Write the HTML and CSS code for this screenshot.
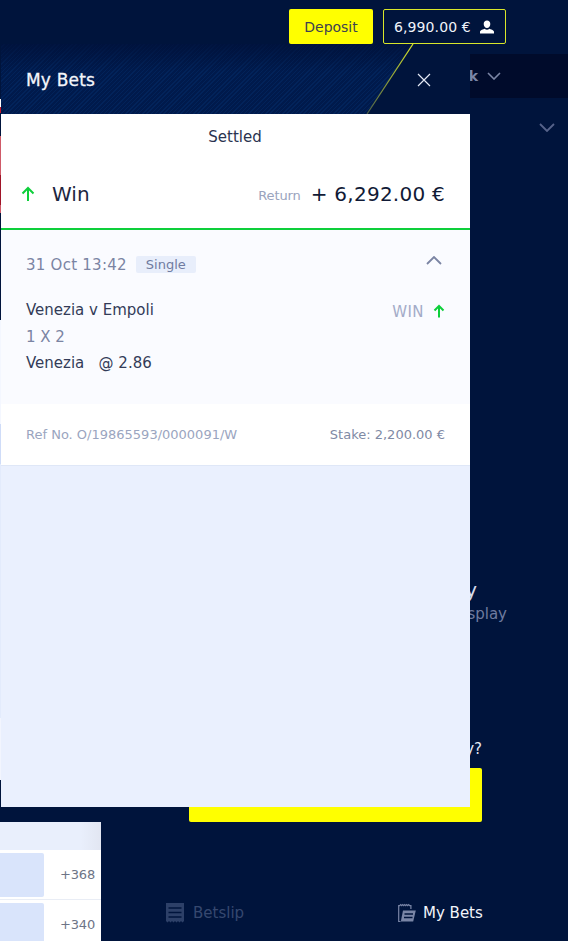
FILE: index.html
```html
<!DOCTYPE html>
<html lang="en">
<head>
<title>My Bets</title>
<meta charset="utf-8">
<meta name="viewport" content="width=device-width, initial-scale=1">
<link rel="stylesheet" href="styles.css">
</head>
<body>

<div class="page">
  <div class="top_bar">
    <button class="deposit" type="button">Deposit</button>
    <div class="balance">
      <span>6,990.00 €</span>
      <svg class="user_icon" viewBox="0 0 16 16"><path d="M8 1.500c-2 0-3.300 1.400-3.300 3.500S6 9 8 9s3.300-2 3.300-4-1.300-3.500-3.300-3.500zM1 14.500v-1.800c0-1.500 3.500-2.700 4.700-3 .6.6 1.400 1 2.300 1s1.700-.4 2.300-1c1.200.3 4.700 1.500 4.700 3v1.800z" fill="#fff"/></svg>
    </div>
  </div>

  <div class="filter_bar">
    <span>k</span>
    <svg class="chevron" viewBox="0 0 14 8"><path d="M1 1l6 6 6-6" fill="none" stroke="#7b86a6" stroke-width="1.600"/></svg>
  </div>

  <div class="second_row">
    <svg class="chevron_big" viewBox="0 0 16 9"><path d="M1 1l7 7 7-7" fill="none" stroke="#56638a" stroke-width="1.800"/></svg>
  </div>

  <div class="promo">
    <p class="promo_title">y</p>
    <p class="promo_sub">splay</p>
    <p class="promo_ask">y?</p>
    <div class="promo_button"></div>
  </div>

  <div class="bottom">
    <div class="odds_panel">
      <div class="odds_head"></div>
      <div class="odds_row">
        <div class="odds_cell"></div>
        <span>+368</span>
      </div>
      <div class="odds_row">
        <div class="odds_cell"></div>
        <span>+340</span>
      </div>
    </div>
    <div class="tab betslip">
      <svg class="tab_icon" viewBox="0 0 18 20"><path d="M0 0h18v18l-1.500 1.500L15 18l-1.500 1.500L12 18l-1.500 1.500L9 18l-1.500 1.500L6 18l-1.500 1.500L3 18l-1.500 1.500L0 18z" fill="#2d4068"/><path d="M2.500 5h13M2.500 9.500h13M2.500 14h13" stroke="#00143c" stroke-width="1.500"/></svg>
      <span>Betslip</span>
    </div>
    <div class="tab mybets">
      <svg class="tab_icon" viewBox="0 0 18 20"><path d="M2.500 18.500H.7V2.700h1l1-1 1 1 1-1 1 1 1-1 1 1 1-1 1 1 1-1 1 1h1.200V6" fill="none" stroke="#7985a6" stroke-width="1.200"/><path d="M5 7.500h12.800L15.200 18.500H2.800z" fill="#7985a6"/><path d="M6.500 11h8.500M6 14.500h8.500" stroke="#00143c" stroke-width="1.300"/></svg>
      <span>My Bets</span>
    </div>
  </div>

  <!-- bits of the page that peek out left of the drawer -->
  <div class="edge"></div>

  <div class="drawer">
    <div class="drawer_head">
      <div class="hatch"></div>
      <svg class="slash" viewBox="0 0 48 70"><defs><linearGradient id="fade" x1="0" y1="0" x2="0" y2="1"><stop offset="0" stop-color="#d8e62a"/><stop offset="1" stop-color="#4d5f48"/></linearGradient></defs><path d="M47 0L1 70" stroke="url(#fade)" stroke-width="1.200" fill="none"/></svg>
      <h2>My Bets</h2>
      <svg class="close" viewBox="0 0 14 14"><path d="M1 1l12 12M13 1L1 13" stroke="#e4e9f5" stroke-width="1.200"/></svg>
    </div>

    <div class="summary">
      <p class="status">Settled</p>
      <div class="result">
        <svg class="arrow" viewBox="0 0 14 16"><path d="M7 15V2M1.500 7.500L7 2l5.500 5.500" fill="none" stroke="#0ecf3b" stroke-width="2"/></svg>
        <span class="result_name">Win</span>
        <span class="return_label">Return</span>
        <span class="return_value">+ 6,292.00 €</span>
      </div>
    </div>

    <div class="bet">
      <div class="bet_head">
        <span class="bet_date">31 Oct 13:42</span>
        <span class="bet_type">Single</span>
        <svg class="chevron_up" viewBox="0 0 16 9"><path d="M1 8l7-7 7 7" fill="none" stroke="#7b84a3" stroke-width="1.800"/></svg>
      </div>
      <div class="bet_body">
        <div class="bet_lines">
          <p>Venezia v Empoli</p>
          <p class="market">1 X 2</p>
          <p>Venezia &nbsp;&nbsp;@ 2.86</p>
        </div>
        <div class="bet_result">
          <span>WIN</span>
          <svg class="arrow_small" viewBox="0 0 12 14"><path d="M6 13.500V2M1.500 6.500L6 2l4.500 4.500" fill="none" stroke="#0ecf3b" stroke-width="2"/></svg>
        </div>
      </div>
    </div>

    <div class="bet_foot">
      <span class="ref">Ref No. O/19865593/0000091/W</span>
      <span class="stake">Stake: 2,200.00 €</span>
    </div>
  </div>
</div>

</body>
</html>
```

FILE: styles.css
```css
* {
  box-sizing: border-box;
}

html, body {
  margin: 0;
  padding: 0;
}

body {
  font-family: "DejaVu Sans", Verdana, sans-serif;
  background-color: #00143c;
}

p, h2 {
  margin: 0;
}

svg {
  display: block;
}

.page {
  position: relative;
  display: flex;
  flex-direction: column;
  width: 568px;
  height: 941px;
  overflow: hidden;
}

/* Top bar */
.top_bar {
  display: flex;
  flex: none;
  justify-content: flex-end;
  gap: 10px;
  height: 54px;
  padding: 9px 62px 0 0;
}

.deposit {
  width: 84px;
  height: 35px;
  border: 0;
  border-radius: 2px;
  background-color: #ffff00;
  color: #3d4150;
  font-family: inherit;
  font-size: 14px;
}

.balance {
  display: flex;
  align-items: center;
  justify-content: space-between;
  width: 123px;
  height: 35px;
  padding: 0 10px;
  border: 1px solid #d8e62a;
  border-radius: 2px;
  color: #f0f3fa;
  font-size: 14px;
  letter-spacing: 0.1px;
}

.user_icon {
  width: 16px;
  height: 16px;
}

/* Under the drawer */
.filter_bar {
  display: flex;
  flex: none;
  align-items: center;
  justify-content: flex-end;
  gap: 9px;
  height: 44px;
  padding-right: 67px;
  background-color: #000b2b;
  color: #7b86a6;
  font-size: 14px;
  font-weight: bold;
}

.chevron {
  width: 14px;
  height: 8px;
}

.second_row {
  display: flex;
  flex: none;
  justify-content: flex-end;
  height: 34px;
  padding: 25px 13px 0 0;
}

.chevron_big {
  width: 16px;
  height: 9px;
}

.promo {
  display: flex;
  flex-direction: column;
  align-items: flex-end;
  flex: 1;
  min-height: 0;
  padding: 446px 61px 0 0;
}

.promo_title {
  padding-right: 30px;
  color: #d5dbea;
  font-size: 20px;
  line-height: 24px;
}

.promo_sub {
  margin-top: 2px;
  color: #6f7b9f;
  font-size: 15px;
  line-height: 20px;
}

.promo_ask {
  margin-top: 115px;
  padding-right: 25px;
  color: #e4e9f5;
  font-size: 15px;
  line-height: 20px;
}

.promo_button {
  flex: none;
  width: 293px;
  height: 54px;
  margin: 9px 25px 0 0;
  border-radius: 2px;
  background-color: #ffff00;
}

/* Bottom strip */
.bottom {
  display: flex;
  flex: none;
  height: 119px;
}

.odds_panel {
  width: 101px;
  background-color: #fff;
}

.odds_head {
  height: 28px;
  background: linear-gradient(to right, #e9effc 80%, #e2e6f2);
}

.odds_row {
  display: flex;
  align-items: center;
  justify-content: space-between;
  height: 50px;
  padding: 3px 6px 3px 0;
  border-bottom: 1px solid #e9edf5;
  color: #6d7486;
  font-size: 13px;
  letter-spacing: -0.2px;
}

.odds_cell {
  flex: none;
  width: 44px;
  height: 44px;
  border-radius: 0 2px 2px 0;
  background-color: #d9e4fb;
}

.tab {
  display: flex;
  align-items: center;
  gap: 9px;
  height: 22px;
  margin-top: 80px;
  font-size: 15px;
}

.betslip {
  width: 232px;
  margin-left: 65px;
  color: #36486f;
}

.mybets {
  gap: 7px;
  color: #f2f5fb;
}

.tab_icon {
  width: 18px;
  height: 20px;
}

/* Left edge, one pixel of the page behind */
.edge {
  position: absolute;
  top: 44px;
  left: 0;
  width: 1px;
  height: 763px;
  background: linear-gradient(to bottom,
    #00143c 0 55px, #fff 55px 63px, #c4182c 63px 69px, #00143c 69px 92px,
    #cf5a68 92px 131px, #a01428 131px 161px, #cf5a68 161px 169px, #00143c 169px 276px,
    #f4f7ff 276px 380px, #cfdcf8 380px 420px, #e3ebfc 420px 674px, #f2f5fe 674px 736px, #00143c 736px);
}

/* Drawer */
.drawer {
  position: absolute;
  top: 44px;
  left: 1px;
  display: flex;
  flex-direction: column;
  width: 469px;
  height: 763px;
  background-color: #eaf0fe;
  color: #1d2640;
}

.drawer_head {
  position: relative;
  display: flex;
  align-items: center;
  justify-content: space-between;
  flex: none;
  height: 70px;
  padding: 2px 39px 0 25px;
  background-color: #00143c;
  color: #f4f6fb;
}

.hatch {
  position: absolute;
  top: 0;
  left: 0;
  width: 412px;
  height: 70px;
  background:
    linear-gradient(to bottom, rgba(0, 16, 56, 0.75), rgba(0, 16, 56, 0) 40%),
    repeating-linear-gradient(135deg, #001a4c 0 2px, #02235a 2px 3px);
  clip-path: polygon(0 0, 100% 0, 366px 100%, 0 100%);
}

.slash {
  position: absolute;
  top: 0;
  left: 365px;
  width: 48px;
  height: 70px;
}

.drawer_head h2 {
  position: relative;
  font-size: 17px;
  font-weight: normal;
  letter-spacing: 0.2px;
  -webkit-text-stroke: 0.3px #f4f6fb;
}

.close {
  position: relative;
  width: 14px;
  height: 14px;
}

.summary {
  flex: none;
  height: 116px;
  border-bottom: 2px solid #0ecf3b;
  background-color: #fff;
}

.status {
  padding: 13px 1px 0 0;
  font-size: 15px;
  line-height: 20px;
  text-align: center;
  color: #2a3350;
}

.result {
  display: flex;
  align-items: center;
  height: 34px;
  margin-top: 30px;
  padding: 0 25px 0 20px;
}

.arrow {
  width: 14px;
  height: 16px;
  margin-right: 17px;
}

.result_name {
  flex: 1;
  font-size: 20px;
}

.return_label {
  margin: 3px 10px 0 0;
  color: #9aa3bd;
  font-size: 13px;
  letter-spacing: -0.1px;
}

.return_value {
  color: #111a36;
  font-size: 20px;
  letter-spacing: 0.25px;
}

.bet {
  flex: none;
  height: 174px;
  padding: 0 25px;
  background-color: #fafbff;
}

.bet_head {
  display: flex;
  align-items: center;
  height: 70px;
  padding-bottom: 1px;
}

.bet_date {
  margin-right: 9px;
  color: #7b84a3;
  font-size: 15px;
  letter-spacing: 0.25px;
}

.bet_type {
  padding: 0 10px;
  border-radius: 2px;
  background-color: #e8eefb;
  color: #6f7ba0;
  font-size: 13px;
  line-height: 17px;
}

.chevron_up {
  width: 16px;
  height: 9px;
  margin: -9px 3px 0 auto;
}

.bet_body {
  display: flex;
  justify-content: space-between;
  margin-top: -3px;
}

.bet_lines {
  font-size: 15px;
  line-height: 27px;
  color: #333b58;
}

.bet_lines p:last-child {
  margin-top: -1px;
}

.market {
  color: #7b84a3;
}

.bet_result {
  display: flex;
  align-items: center;
  gap: 9px;
  height: 24px;
  margin-top: 3px;
  color: #a3abc8;
  font-size: 15px;
  letter-spacing: 0.4px;
}

.arrow_small {
  width: 12px;
  height: 14px;
  margin-top: -2px;
}

.bet_foot {
  display: flex;
  align-items: center;
  justify-content: space-between;
  flex: none;
  height: 62px;
  padding: 0 25px;
  border-bottom: 1px solid #dfe7f7;
  background-color: #fff;
  font-size: 13px;
}

.ref {
  color: #9aa5c0;
}

.stake {
  color: #7f8aa5;
}
```
